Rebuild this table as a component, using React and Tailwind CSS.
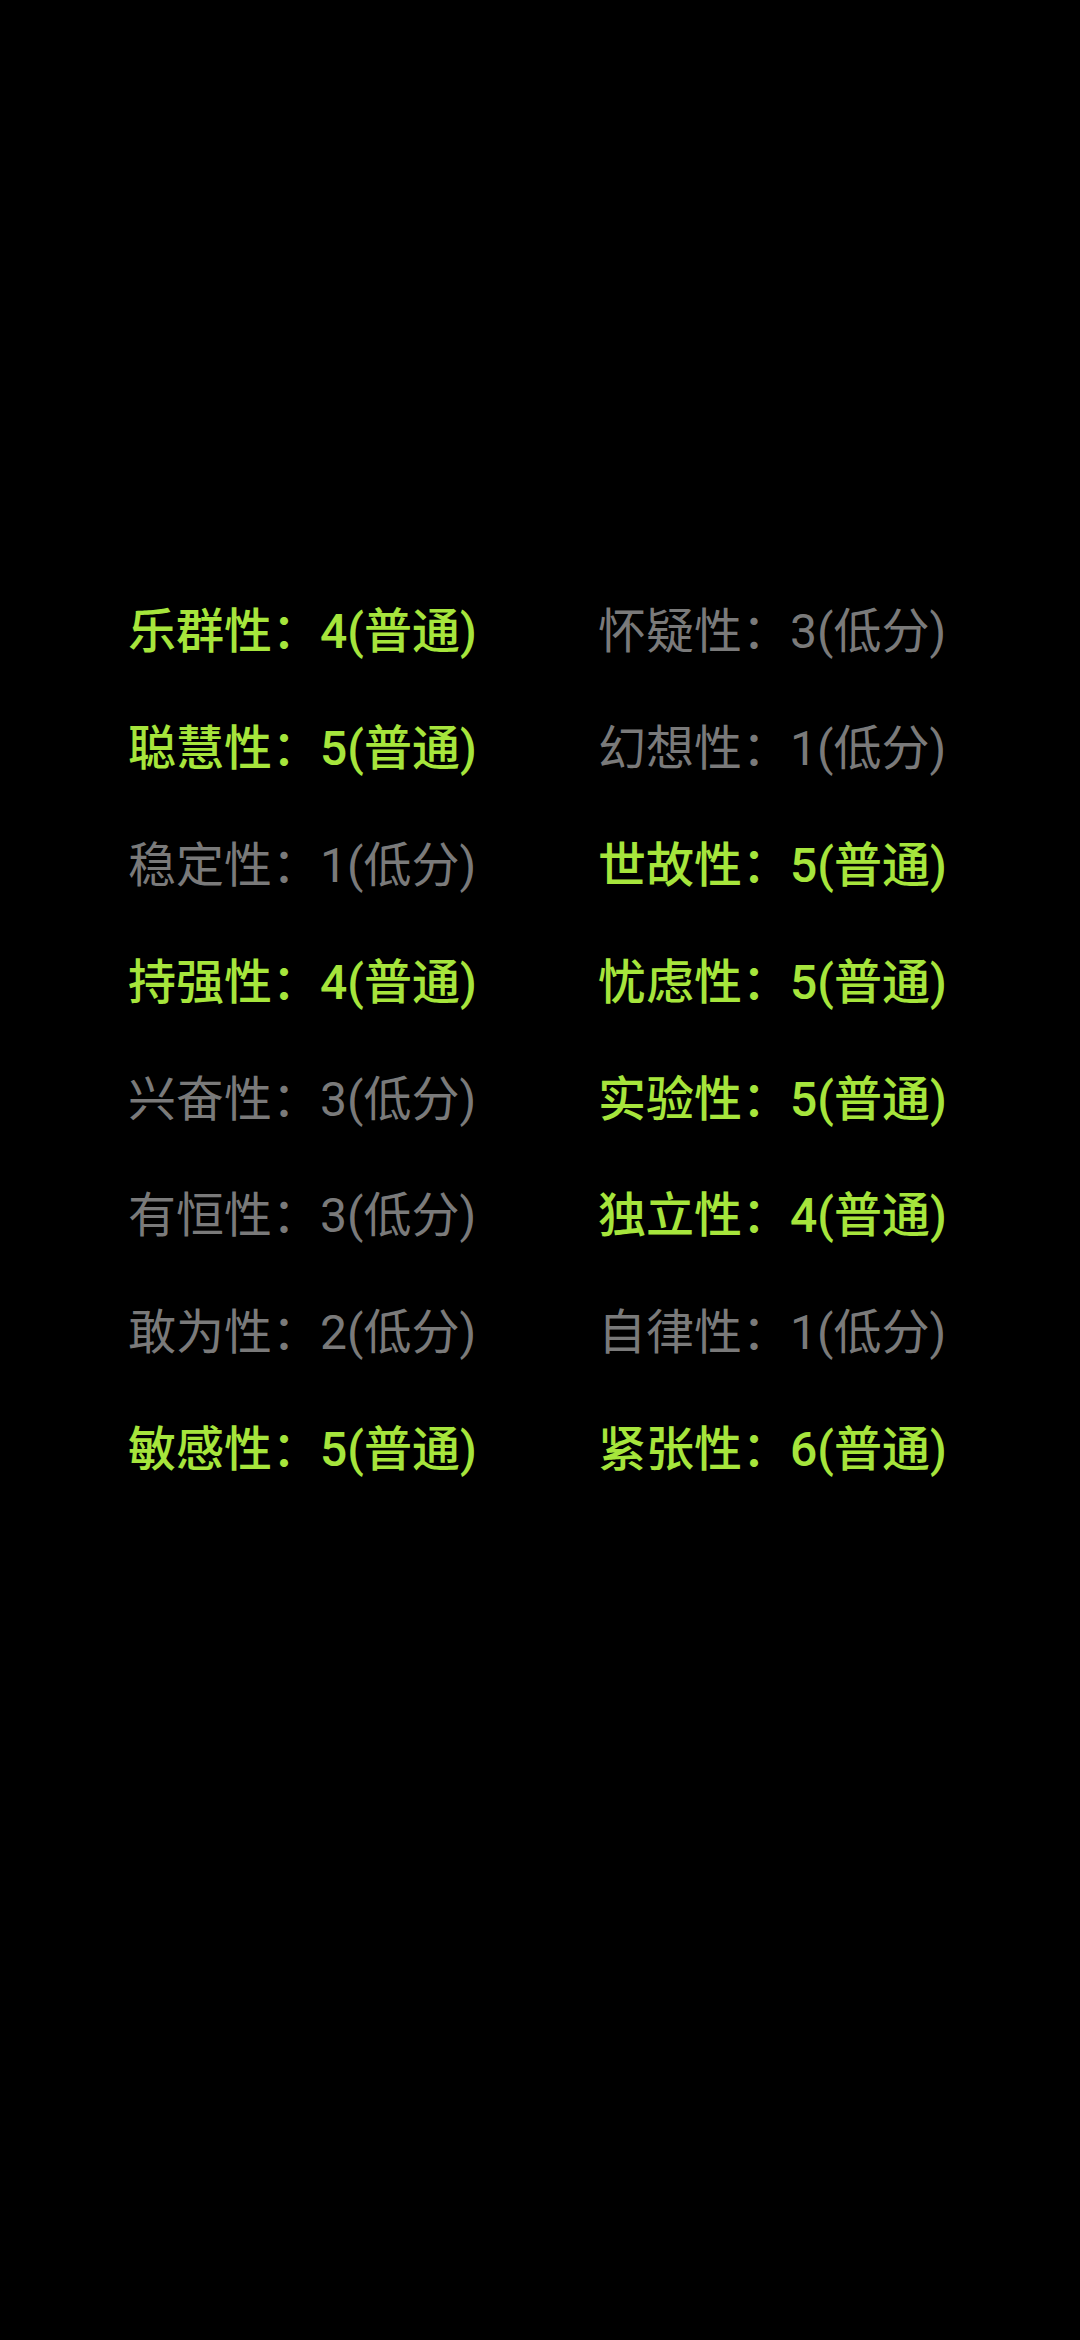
const left = [
  ["乐群性", "4(普通)", true],
  ["聪慧性", "5(普通)", true],
  ["稳定性", "1(低分)", false],
  ["持强性", "4(普通)", true],
  ["兴奋性", "3(低分)", false],
  ["有恒性", "3(低分)", false],
  ["敢为性", "2(低分)", false],
  ["敏感性", "5(普通)", true],
];
const right = [
  ["怀疑性", "3(低分)", false],
  ["幻想性", "1(低分)", false],
  ["世故性", "5(普通)", true],
  ["忧虑性", "5(普通)", true],
  ["实验性", "5(普通)", true],
  ["独立性", "4(普通)", true],
  ["自律性", "1(低分)", false],
  ["紧张性", "6(普通)", true],
];

function Item({ label, value, hi }) {
  return (
    <div
      className={
        "h-[116.8px] flex items-center whitespace-nowrap text-[48px] leading-none " +
        (hi ? "text-[#a6e53c] font-medium" : "text-[#7a7a7a] font-normal")
      }
    >
      {label}：{value}
    </div>
  );
}

export default function App() {
  return (
    <div
      className="w-[1080px] h-[2340px] bg-black overflow-hidden"
      style={{ fontFamily: 'Roboto, "Noto Sans CJK SC", sans-serif' }}
    >
      <div className="pt-[574px] pl-[128px] flex">
        <div className="w-[470px] flex flex-col">
          {left.map(([l, v, h]) => (
            <Item key={l} label={l} value={v} hi={h} />
          ))}
        </div>
        <div className="flex flex-col">
          {right.map(([l, v, h]) => (
            <Item key={l} label={l} value={v} hi={h} />
          ))}
        </div>
      </div>
    </div>
  );
}
